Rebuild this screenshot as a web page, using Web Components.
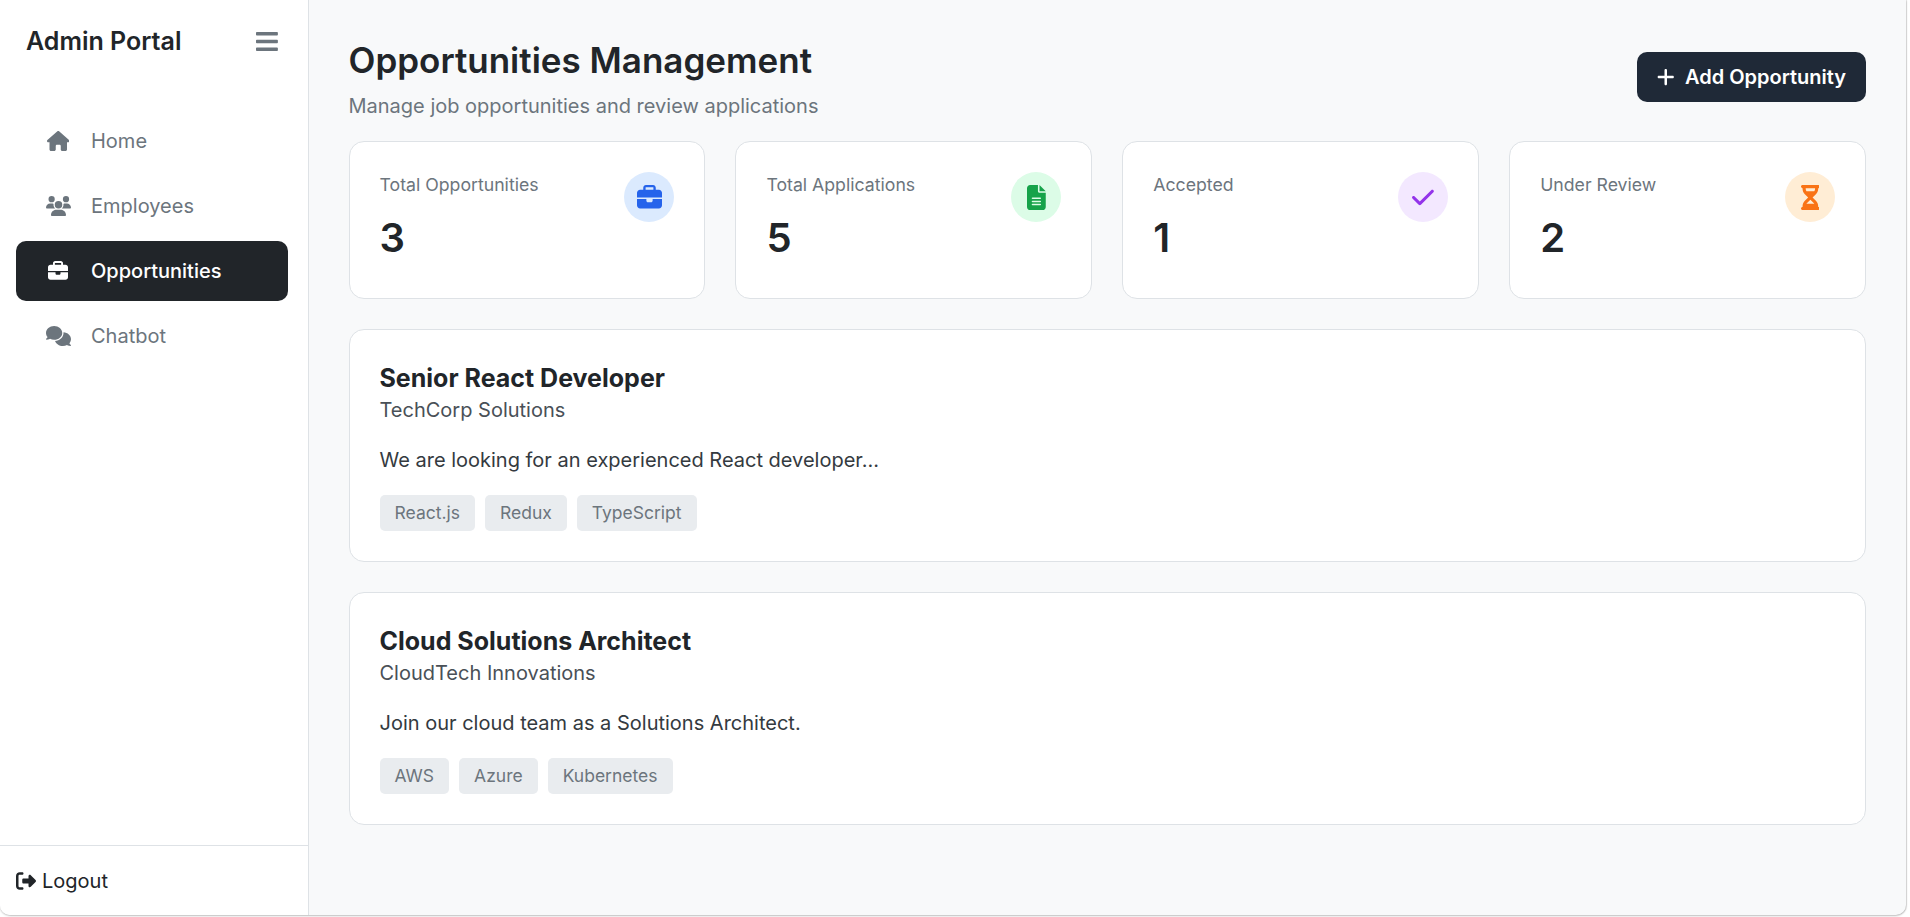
<!DOCTYPE html>
<html lang="en"><head><meta charset="utf-8"><title>Admin Portal</title>
<style>
html,body{margin:0;padding:0;background:#fff;height:100%;overflow:hidden}
body{font-family:Inter,"Liberation Sans",sans-serif;color:#212529}
</style></head><body>
<app-shell>
  <side-bar slot="side">
    <nav-item icon="house" label="Home"></nav-item>
    <nav-item icon="users" label="Employees"></nav-item>
    <nav-item icon="briefcase" label="Opportunities" active></nav-item>
    <nav-item icon="comments" label="Chatbot"></nav-item>
  </side-bar>
  <page-header></page-header>
  <stats-row>
    <stat-card label="Total Opportunities" value="3" icon="briefcase" fg="#2563eb" bg="#dbeafe"></stat-card>
    <stat-card label="Total Applications" value="5" icon="file" fg="#16a34a" bg="#dcfce7"></stat-card>
    <stat-card label="Accepted" value="1" icon="check" fg="#9333ea" bg="#f3e8ff"></stat-card>
    <stat-card label="Under Review" value="2" icon="hourglass" fg="#f97316" bg="#ffedd5"></stat-card>
  </stats-row>
  <job-card title-text="Senior React Developer" company="TechCorp Solutions" desc="We are looking for an experienced React developer..." tags="React.js,Redux,TypeScript"></job-card>
  <job-card title-text="Cloud Solutions Architect" company="CloudTech Innovations" desc="Join our cloud team as a Solutions Architect." tags="AWS,Azure,Kubernetes"></job-card>
</app-shell>
<script>
const ICONS={
house:[576,"M575.8 255.5c0 18-15 32.1-32 32.1h-32l.7 160.2c0 2.7-.2 5.4-.5 8.1V472c0 22.1-17.9 40-40 40H456c-1.1 0-2.2 0-3.3-.1c-1.4 .1-2.8 .1-4.2 .1H416 392c-22.1 0-40-17.9-40-40V448 384c0-17.7-14.3-32-32-32H256c-17.7 0-32 14.3-32 32v64 24c0 22.1-17.9 40-40 40H160 128.1c-1.5 0-3-.1-4.5-.2c-1.2 .1-2.4 .2-3.6 .2H104c-22.1 0-40-17.9-40-40V360c0-.9 0-1.9 .1-2.8V287.6H32c-18 0-32-14-32-32.1c0-9 3-17 10-24L266.4 8c7-7 15-8 22-8s15 2 21 7L564.8 231.5c8 7 12 15 11 24z"],
users:[640,"M144 0a80 80 0 1 1 0 160A80 80 0 1 1 144 0zM512 0a80 80 0 1 1 0 160A80 80 0 1 1 512 0zM0 298.7C0 239.8 47.8 192 106.7 192h42.7c15.9 0 31 3.5 44.6 9.7c-1.3 7.2-1.9 14.7-1.9 22.3c0 38.2 16.8 72.5 43.3 96c-.2 0-.4 0-.7 0H21.3C9.6 320 0 310.4 0 298.7zM405.3 320c-.2 0-.4 0-.7 0c26.6-23.5 43.3-57.8 43.3-96c0-7.6-.7-15-1.9-22.3c13.6-6.3 28.7-9.7 44.6-9.7h42.7C592.2 192 640 239.8 640 298.7c0 11.8-9.6 21.3-21.3 21.3H405.3zM224 224a96 96 0 1 1 192 0 96 96 0 1 1 -192 0zM128 485.3C128 411.7 187.7 352 261.3 352H378.7C452.3 352 512 411.7 512 485.3c0 14.7-11.9 26.7-26.7 26.7H154.7c-14.7 0-26.7-11.9-26.7-26.7z"],
briefcase:[512,"M184 48H328c4.4 0 8 3.6 8 8V96H176V56c0-4.4 3.6-8 8-8zm-56 8V96H64C28.7 96 0 124.7 0 160v96H192 320 512V160c0-35.3-28.7-64-64-64H384V56c0-30.9-25.1-56-56-56H184c-30.9 0-56 25.1-56 56zM512 288H320v32c0 17.7-14.3 32-32 32H224c-17.7 0-32-14.3-32-32V288H0V416c0 35.3 28.7 64 64 64H448c35.3 0 64-28.7 64-64V288z"],
comments:[640,"M208 352c114.9 0 208-78.8 208-176S322.9 0 208 0S0 78.8 0 176c0 38.6 14.7 74.3 39.6 103.4c-3.5 9.4-8.7 17.7-14.2 24.7c-4.8 6.2-9.7 11-13.3 14.3c-1.8 1.6-3.3 2.9-4.3 3.7c-.5 .4-.9 .7-1.1 .8l-.2 .2 0 0 0 0C1 327.2-1.4 334.4 .8 340.9S9.1 352 16 352c21.8 0 43.8-5.6 62.1-12.5c9.2-3.5 17.8-7.4 25.3-11.4C134.1 343.3 169.8 352 208 352zM448 176c0 112.3-99.1 196.9-216.5 207C255.8 457.4 336.4 512 432 512c38.2 0 73.9-8.7 104.7-23.9c7.5 4 16 7.9 25.2 11.4c18.3 6.9 40.3 12.5 62.1 12.5c6.9 0 13.1-4.5 15.2-11.1c2.1-6.6-.2-13.8-5.8-17.9l0 0 0 0-.2-.2c-.2-.2-.6-.4-1.1-.8c-1 -.8-2.5-2-4.3-3.7c-3.6-3.3-8.5-8.1-13.3-14.3c-5.5-7-10.7-15.4-14.2-24.7c24.9-29 39.6-64.7 39.6-103.4c0-92.8-84.9-168.9-192.6-175.5c.4 5.1 .6 10.3 .6 15.5z"],
bars:[448,"M16 132h416c8.837 0 16-7.163 16-16V76c0-8.837-7.163-16-16-16H16C7.163 60 0 67.163 0 76v40c0 8.837 7.163 16 16 16zm0 160h416c8.837 0 16-7.163 16-16v-40c0-8.837-7.163-16-16-16H16c-8.837 0-16 7.163-16 16v40c0 8.837 7.163 16 16 16zm0 160h416c8.837 0 16-7.163 16-16v-40c0-8.837-7.163-16-16-16H16c-8.837 0-16 7.163-16 16v40c0 8.837 7.163 16 16 16z"],
logout:[512,"M377.9 105.9L500.7 228.7c7.2 7.2 11.3 17.1 11.3 27.3s-4.1 20.1-11.3 27.3L377.9 406.1c-6.4 6.4-15 9.9-24 9.9c-18.7 0-33.9-15.2-33.9-33.9l0-62.1-128 0c-17.7 0-32-14.3-32-32l0-64c0-17.7 14.3-32 32-32l128 0 0-62.1c0-18.7 15.2-33.9 33.9-33.9c9 0 17.6 3.6 24 9.9zM160 96L96 96c-17.7 0-32 14.3-32 32l0 256c0 17.7 14.3 32 32 32l64 0c17.7 0 32 14.3 32 32s-14.3 32-32 32l-64 0c-53 0-96-43-96-96L0 128C0 75 43 32 96 32l64 0c17.7 0 32 14.3 32 32s-14.3 32-32 32z"],
plus:[448,"M256 80c0-17.7-14.3-32-32-32s-32 14.3-32 32V224H48c-17.7 0-32 14.3-32 32s14.3 32 32 32H192V432c0 17.7 14.3 32 32 32s32-14.3 32-32V288H400c17.7 0 32-14.3 32-32s-14.3-32-32-32H256V80z"],
check:[448,"M438.6 105.4c12.5 12.5 12.5 32.8 0 45.3l-256 256c-12.5 12.5-32.8 12.5-45.3 0l-128-128c-12.5-12.5-12.5-32.8 0-45.3s32.8-12.5 45.3 0L160 338.7 393.4 105.4c12.5-12.5 32.8-12.5 45.3 0z"],
file:[384,"M64 0C28.7 0 0 28.7 0 64V448c0 35.3 28.7 64 64 64H320c35.3 0 64-28.7 64-64V160H256c-17.7 0-32-14.3-32-32V0H64zM256 0V128H384L256 0zM112 256H272c8.8 0 16 7.2 16 16s-7.2 16-16 16H112c-8.8 0-16-7.2-16-16s7.2-16 16-16zm0 64H272c8.8 0 16 7.2 16 16s-7.2 16-16 16H112c-8.8 0-16-7.2-16-16s7.2-16 16-16zm0 64H272c8.8 0 16 7.2 16 16s-7.2 16-16 16H112c-8.8 0-16-7.2-16-16s7.2-16 16-16z"],
hourglass:[384,"M32 0C14.3 0 0 14.3 0 32S14.3 64 32 64V75c0 42.4 16.9 83.1 46.9 113.1L146.7 256 78.9 323.9C48.9 353.9 32 394.6 32 437v11c-17.7 0-32 14.3-32 32s14.3 32 32 32H64 320h32c17.7 0 32-14.3 32-32s-14.3-32-32-32V437c0-42.4-16.9-83.1-46.9-113.1L237.3 256l67.9-67.9c30-30 46.9-70.7 46.9-113.1V64c17.7 0 32-14.3 32-32s-14.3-32-32-32H320 64 32zM96 75V64H288V75c0 19-5.6 37.4-16 53H112c-10.3-15.6-16-34-16-53zm16 309c3.5-5.3 7.6-10.3 12.1-14.9L192 301.3l67.9 67.9c4.6 4.6 8.6 9.6 12.1 14.9H112z"]
};
function icon(name,h,extra=''){const [w,d]=ICONS[name];return `<svg xmlns="http://www.w3.org/2000/svg" viewBox="0 0 ${w} 512" height="${h}" width="${h*w/512}" fill="currentColor" style="display:block;flex:none;${extra}"><path d="${d}"/></svg>`}
function def(tag,html){customElements.define(tag,class extends HTMLElement{constructor(){super();this.attachShadow({mode:'open'}).innerHTML=typeof html==='function'?html(this):html}
 connectedCallback(){if(typeof html==='function'){this.shadowRoot.innerHTML=html(this)}}})}
def('app-shell',`<style>:host{display:flex;width:1906px;height:915px;background:#f8f9fa;border-radius:0 0 10px 10px;box-shadow:0 1px 2px rgba(0,0,0,.25),1px 0 1px rgba(0,0,0,.12);overflow:hidden}
main{flex:1;min-width:0;padding:40px 40px 0 39.5px;display:flex;flex-direction:column;gap:30px}</style><slot name="side"></slot><main><slot></slot></main>`);
def('side-bar',()=>`<style>:host{display:flex;flex-direction:column;width:308px;flex:none;background:#fff;border-right:1px solid #dee2e6}
.top{display:flex;align-items:center;justify-content:space-between;height:82px;padding:0 30px 0 26px;box-sizing:border-box;font-size:25px;font-weight:600;color:#212529}
.top span{line-height:1}.ham{color:#6c757d}
nav{flex:1;padding:29px 20px 0 16px;display:flex;flex-direction:column;gap:5px}
.foot{border-top:1px solid #dee2e6;height:69px;padding:0 16px;display:flex;align-items:center;gap:6px;font-size:20px;color:#212529}</style>
<div class="top"><span>Admin Portal</span><span class="ham">${icon('bars',25)}</span></div>
<nav><slot></slot></nav>
<div class="foot">${icon('logout',20)}<span>Logout</span></div>`);
def('nav-item',el=>`<style>:host{display:block}
a{display:flex;align-items:center;height:60px;border-radius:10px;padding:0 29px;font-size:20px;color:#6c757d;box-sizing:border-box}
a.on{background:#212529;color:#fff;font-weight:500}
.i{width:26px;display:flex;justify-content:center;margin-right:20px}</style>
<a class="${el.hasAttribute('active')?'on':''}"><span class="i">${icon(el.getAttribute('icon'),20)}</span><span>${el.getAttribute('label')}</span></a>`);
def('page-header',()=>`<style>:host{display:flex;justify-content:space-between;align-items:flex-start;margin-bottom:-6.8px}
h1{margin:0;font-size:35px;font-weight:600;line-height:40px;color:#212529}
p{margin:14px 0 0;font-size:20px;line-height:24px;color:#6c757d}
button{display:flex;align-items:center;gap:10px;height:50px;margin-top:12px;padding:0 20px;border:0;border-radius:10px;background:#1f2937;color:#fff;font:600 20px Inter,"Liberation Sans",sans-serif}</style>
<div><h1>Opportunities Management</h1><p>Manage job opportunities and review applications</p></div>
<button>${icon('plus',20)}<span>Add Opportunity</span></button>`);
def('stats-row',`<style>:host{display:grid;grid-template-columns:repeat(4,1fr);gap:30px}</style><slot></slot>`);
def('stat-card',el=>`<style>:host{display:flex;justify-content:space-between;height:158px;box-sizing:border-box;padding:30px;background:#fff;border:1px solid #dee2e6;border-radius:15px}
.l{font-size:17.7px;color:#6c757d;line-height:21px;margin-top:2px}.v{font-size:40px;font-weight:600;color:#212529;line-height:48px;margin-top:19px}
.c{width:50px;height:50px;border-radius:50%;display:flex;align-items:center;justify-content:center;background:${el.getAttribute('bg')};color:${el.getAttribute('fg')}}</style>
<div><div class="l">${el.getAttribute('label')}</div><div class="v">${el.getAttribute('value')}</div></div>
<div class="c">${icon(el.getAttribute('icon'),25)}</div>`);
def('job-card',el=>`<style>:host{display:block;height:233px;box-sizing:border-box;padding:30px;background:#fff;border:1px solid #dee2e6;border-radius:15px}
h3{margin:0;font-size:25px;font-weight:700;color:#212529;line-height:37.5px}
.co{font-size:20px;color:#495057;line-height:24px}
.d{font-size:20px;color:#343a40;line-height:24px;margin-top:26.5px}
.tags{display:flex;gap:10px;margin-top:23px}
.t{font-size:17.5px;line-height:35px;color:#6c757d;background:#e9ecef;border-radius:5px;padding:0 15px;height:36px}</style>
<h3>${el.getAttribute('title-text')}</h3><div class="co">${el.getAttribute('company')}</div><div class="d">${el.getAttribute('desc')}</div>
<div class="tags">${el.getAttribute('tags').split(',').map(t=>`<span class="t">${t}</span>`).join('')}</div>`);
</script>
</body></html>
